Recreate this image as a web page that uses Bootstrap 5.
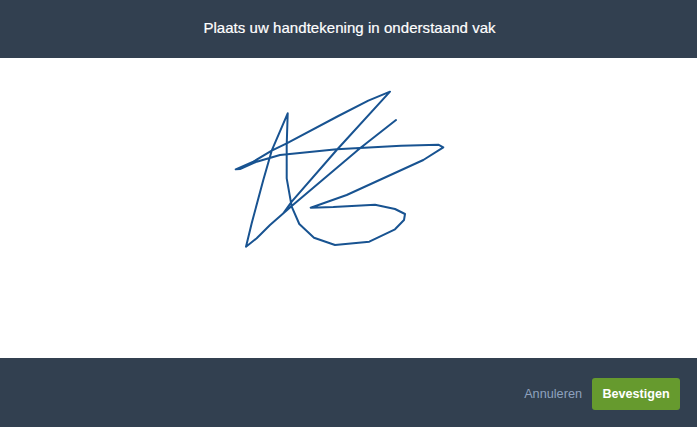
<!DOCTYPE html>
<html lang="nl">
<head>
<meta charset="utf-8">
<title>Handtekening</title>
<link href="https://cdn.jsdelivr.net/npm/bootstrap@5.3.0/dist/css/bootstrap.min.css" rel="stylesheet">
<style>
html, body { height: 100%; margin: 0; background: #fff; font-family: "Liberation Sans", Arial, sans-serif; }
.sign-page { height: 427px; overflow: hidden; }
.sign-head { height: 58px; background: #324050; color: #fff; font-size: 15px; letter-spacing: .05px; padding-left: 2px; padding-bottom: 1px; -webkit-text-stroke: .2px #fff; }
.sign-canvas { height: 300px; background: #fff; }
.sign-canvas svg { display: block; width: 100%; height: 100%; }
.sign-stroke { fill: none; stroke: #185391; stroke-width: 2; stroke-linejoin: round; stroke-linecap: round; }
.sign-foot { height: 69px; background: #324050; padding-right: 17px; padding-top: 20px; }
.sign-cancel { color: #8ea2be; font-size: 12.7px; text-decoration: none; padding: 0; border: 0; background: none; margin-right: 10px; line-height: 32px; }
.sign-confirm { width: 88px; height: 32px; padding: 0; background: #669a2e; border: 0; border-radius: 3px; color: #fff; font-size: 12.6px; font-weight: 700; line-height: 32px; }
.sign-confirm:hover { background: #669a2e; color: #fff; }
</style>
</head>
<body>
<div class="sign-page d-flex flex-column">
  <header class="sign-head d-flex align-items-center justify-content-center">Plaats uw handtekening in onderstaand vak</header>
  <main class="sign-canvas">
    <svg viewBox="0 58 697 300" xmlns="http://www.w3.org/2000/svg" aria-label="Handtekening">
      <path class="sign-stroke" d="M283.3 213.3 291.7 201.7 336.7 150 390 91.7 368.3 100.7 338.3 116 286.7 143.3 271.7 150.7 253.3 161.7 235.7 169.3 240 169 256.7 161.7 280 155 336.7 149.3 401 145.7 438.3 144.7 443.3 147.3 423.3 160 346.7 195 310.7 207.7 333.3 207 375 204.7 395 209 405 214 404 220 395 229.3 369.3 241.7 335 245 314 237.7 299.3 224 291.7 206.7 286.7 178.3 286.7 145 287.7 113.3 271.7 150.7 263.3 180 251.7 223.3 246 246.7 256.7 238.3 270 225 291.7 206 360 148.3 396 120"/>
    </svg>
  </main>
  <footer class="sign-foot d-flex justify-content-end align-items-start">
    <a class="sign-cancel" href="#">Annuleren</a>
    <button type="button" class="btn sign-confirm">Bevestigen</button>
  </footer>
</div>
<script src="https://cdn.jsdelivr.net/npm/bootstrap@5.3.0/dist/js/bootstrap.bundle.min.js"></script>
</body>
</html>
